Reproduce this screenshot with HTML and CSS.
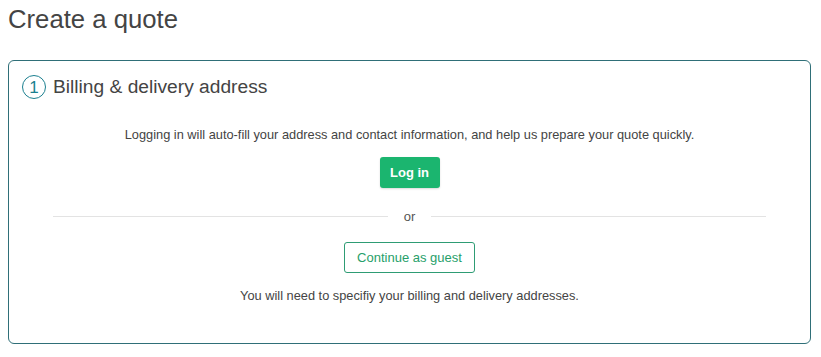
FILE: index.html
```html
<!DOCTYPE html>
<html lang="en">
  <head>
    <meta charset="UTF-8" />
    <meta name="viewport" content="width=device-width, initial-scale=1.0" />
    <title>Create a quote</title>
    <link rel="stylesheet" href="styles.css">
  </head>
  <body>
    <h1 class="page-title">Create a quote</h1>

    <section class="step-card">
      <h2 class="step-title">
        <span class="step-num">1</span>
        Billing &amp; delivery address
      </h2>

      <div class="step-body">
        <p class="hint">Logging in will auto-fill your address and contact information, and help us prepare your quote quickly.</p>
        <button class="btn btn-primary">Log in</button>

        <div class="divider"><span>or</span></div>

        <button class="btn btn-outline">Continue as guest</button>
        <p class="hint">You will need to specifiy your billing and delivery addresses.</p>
      </div>
    </section>
  </body>
</html>
```

FILE: styles.css
```css
body {
  font-family: "Liberation Sans", Arial, sans-serif;
  color: #444;
  margin: 0;
  padding: 0 10px 0 8px;
  background: #fff;
}
.page-title {
  font-size: 25.7px;
  font-weight: 400;
  color: #444;
  margin: 0;
  padding-top: 3px;
  line-height: 32px;
  height: 60px;
  box-sizing: border-box;
}
.step-card {
  border: 1px solid #2f6f78;
  border-radius: 6px;
  padding: 13px 13px 0;
  height: 284px;
  box-sizing: border-box;
}
.step-title {
  display: flex;
  align-items: center;
  gap: 7px;
  font-size: 19.2px;
  font-weight: 400;
  color: #444;
  margin: 0;
  height: 26px;
}
.step-num {
  display: inline-flex;
  align-items: center;
  justify-content: center;
  width: 22px;
  height: 22px;
  border: 1px solid #1b7f8f;
  border-radius: 50%;
  color: #1b7f8f;
  font-size: 17px;
  line-height: 1;
}
.step-body {
  display: flex;
  flex-direction: column;
  align-items: center;
  padding: 0 31px;
}
.hint {
  font-size: 12.8px;
  color: #444;
  margin: 0;
  line-height: 18px;
}
.step-body .hint:first-child {
  margin-top: 26px;
  margin-bottom: 13px;
}
.btn {
  font-family: inherit;
  font-size: 13px;
  border-radius: 3px;
  cursor: pointer;
  height: 31px;
  white-space: nowrap;
}
.btn-primary {
  background: #1bb56f;
  color: #fff;
  border: none;
  font-weight: 700;
  width: 60px;
  padding: 0;
  box-shadow: 0 1px 2px rgba(0, 0, 0, 0.15);
}
.btn-outline {
  background: #fff;
  color: #27a06a;
  border: 1px solid #2e9c74;
  padding: 0;
  width: 131px;
  margin-bottom: 14px;
}
.divider {
  display: flex;
  align-items: center;
  gap: 16px;
  align-self: stretch;
  font-size: 13px;
  color: #555;
  margin: 19px 0 17px;
  height: 18px;
}
.divider::before,
.divider::after {
  content: "";
  flex: 1;
  border-top: 1px solid #e3e3e3;
}
```
